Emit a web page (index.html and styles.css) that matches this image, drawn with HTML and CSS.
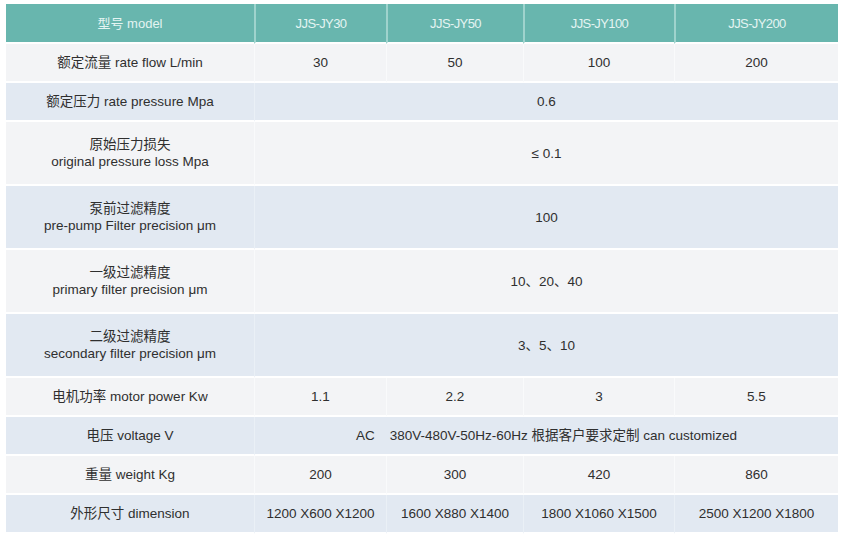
FILE: index.html
```html
<!DOCTYPE html>
<html lang="zh">
<head>
<meta charset="utf-8">
<title>JJS-JY 参数表</title>
<link rel="stylesheet" href="styles.css">
</head>
<body>
<table class="spec">
  <colgroup>
    <col class="c1"><col class="c2"><col class="c3"><col class="c4"><col class="c5">
  </colgroup>
  <thead>
    <tr class="head">
      <th>型号 model</th><th class="model">JJS-JY30</th><th class="model">JJS-JY50</th><th class="model">JJS-JY100</th><th class="model">JJS-JY200</th>
    </tr>
  </thead>
  <tbody>
    <tr class="gray single">
      <td>额定流量 rate flow L/min</td><td>30</td><td>50</td><td>100</td><td>200</td>
    </tr>
    <tr class="blue single">
      <td>额定压力 rate pressure Mpa</td><td colspan="4">0.6</td>
    </tr>
    <tr class="gray double">
      <td>原始压力损失<br>original pressure loss Mpa</td><td colspan="4">≤ 0.1</td>
    </tr>
    <tr class="blue double">
      <td>泵前过滤精度<br>pre-pump Filter precision μm</td><td colspan="4">100</td>
    </tr>
    <tr class="gray double">
      <td>一级过滤精度<br>primary filter precision μm</td><td colspan="4">10、20、40</td>
    </tr>
    <tr class="blue double">
      <td>二级过滤精度<br>secondary filter precision μm</td><td colspan="4">3、5、10</td>
    </tr>
    <tr class="gray single">
      <td>电机功率 motor power Kw</td><td>1.1</td><td>2.2</td><td>3</td><td>5.5</td>
    </tr>
    <tr class="blue single">
      <td>电压 voltage V</td><td colspan="4">AC&nbsp;&nbsp;&nbsp;&nbsp;380V-480V-50Hz-60Hz 根据客户要求定制 can customized</td>
    </tr>
    <tr class="gray single">
      <td>重量 weight Kg</td><td>200</td><td>300</td><td>420</td><td>860</td>
    </tr>
    <tr class="blue single">
      <td>外形尺寸 dimension</td><td>1200 X600 X1200</td><td>1600 X880 X1400</td><td>1800 X1060 X1500</td><td>2500 X1200 X1800</td>
    </tr>
  </tbody>
</table>
</body>
</html>
```

FILE: styles.css
```css
html, body {
  margin: 0;
  padding: 0;
  background: #ffffff;
}

body {
  padding: 4px 0 0 6px;
}

.spec {
  width: 832px;
  table-layout: fixed;
  border-collapse: separate;
  border-spacing: 0;
  font-family: "Liberation Sans", "Noto Sans CJK SC", sans-serif;
  font-size: 13.5px;
  line-height: 17px;
  color: #2f2f2f;
}

.c1 { width: 248px; }
.c2 { width: 132px; }
.c3 { width: 137px; }
.c4 { width: 151px; }
.c5 { width: 164px; }

.spec th,
.spec td {
  padding: 0;
  text-align: center;
  vertical-align: middle;
  border-bottom: 2px solid #ffffff;
  box-sizing: border-box;
}

.spec th + th,
.spec td + td {
  border-left: 1px solid #f9fafb;
}

.head th {
  background: #68b6ae;
  color: #e4f4f2;
  font-weight: normal;
  font-size: 13px;
  height: 40px;
}

.head th.model {
  letter-spacing: -0.6px;
}

.head th + th {
  border-left: 2px solid #9fd3cd;
}

.gray td { background: #f3f4f6; }
.blue td { background: #e2e9f2; }

.single td { height: 39px; }
.double td { height: 64px; }

.blue td + td { border-left-color: #eaf0f6; }
```
